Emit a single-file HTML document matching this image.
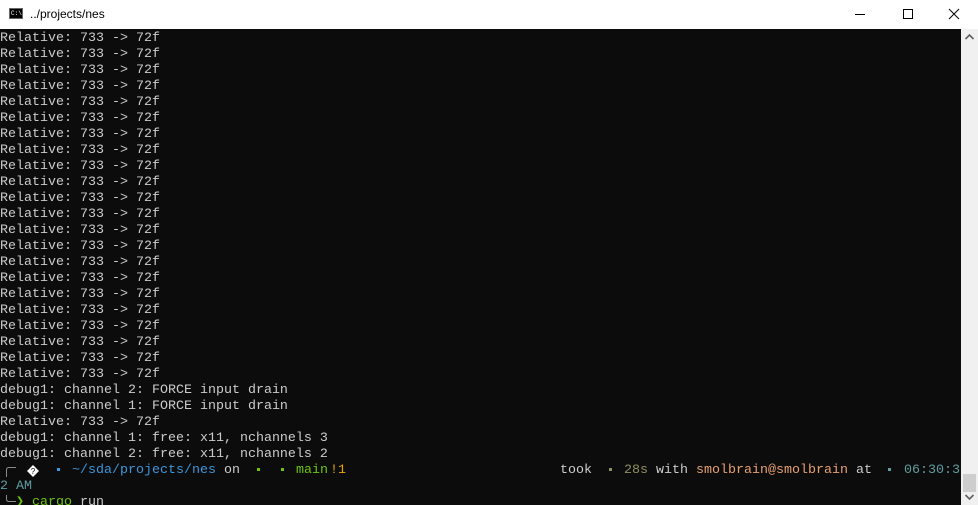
<!DOCTYPE html>
<html><head><meta charset="utf-8"><style>
html,body{margin:0;padding:0;width:978px;height:505px;overflow:hidden;background:#fff;}
#title{position:absolute;left:0;top:0;width:978px;height:29px;background:#fff;font-family:"Liberation Sans",sans-serif;font-size:12px;color:#000;}
#title .t{position:absolute;left:30px;top:7px;}
#icon{position:absolute;left:9px;top:8px;width:14px;height:11px;background:#000;border:1px solid #666;box-sizing:border-box;}
#icon span{position:absolute;left:1px;top:2px;font-size:6px;color:#fff;font-family:"Liberation Mono",monospace;line-height:6px;}
#term{position:absolute;left:0;top:29px;width:961px;height:476px;background:#0c0c0c;overflow:hidden;}
pre{position:absolute;left:0;top:2px;margin:0;font-family:"Liberation Mono","Noto Sans CJK JP",monospace;font-size:13.33px;line-height:16px;color:#cccccc;white-space:pre;}
.s{position:absolute;font-family:"Liberation Mono","DejaVu Sans Mono",monospace;font-size:13.33px;line-height:16px;white-space:pre;}
.d{position:absolute;width:3px;height:3px;background:currentColor;}
.b{color:#3a96dd}.g{color:#6cc40c}.o{color:#e5a50a}.w{color:#cccccc}.ol{color:#909060}.pe{color:#e8a070}.te{color:#5f9ea0}.gr{color:#8a8a8a}
#sb{position:absolute;left:961px;top:29px;width:17px;height:476px;background:#f0f0f0;}
#thumb{position:absolute;left:2px;top:445px;width:13px;height:18px;background:#cdcdcd;}
</style></head><body>
<div id="title"><div id="icon"><span>C:\</span></div><div class="t">../projects/nes</div>
<svg style="position:absolute;left:855px;top:8px" width="110" height="14">
<line x1="0" y1="6.5" x2="10" y2="6.5" stroke="#000"/>
<rect x="48.5" y="1.5" width="9" height="9" fill="none" stroke="#000"/>
<path d="M94 1 L104 11 M104 1 L94 11" stroke="#000"/>
</svg></div>
<div id="term"><pre>Relative: 733 -> 72f
Relative: 733 -> 72f
Relative: 733 -> 72f
Relative: 733 -> 72f
Relative: 733 -> 72f
Relative: 733 -> 72f
Relative: 733 -> 72f
Relative: 733 -> 72f
Relative: 733 -> 72f
Relative: 733 -> 72f
Relative: 733 -> 72f
Relative: 733 -> 72f
Relative: 733 -> 72f
Relative: 733 -> 72f
Relative: 733 -> 72f
Relative: 733 -> 72f
Relative: 733 -> 72f
Relative: 733 -> 72f
Relative: 733 -> 72f
Relative: 733 -> 72f
Relative: 733 -> 72f
Relative: 733 -> 72f
debug1: channel 2: FORCE input drain
debug1: channel 1: FORCE input drain
Relative: 733 -> 72f
debug1: channel 1: free: x11, nchannels 3
debug1: channel 2: free: x11, nchannels 2</pre>
<svg style="position:absolute;left:0;top:432px" width="24" height="48">
<path d="M6.5 16 V9 Q6.5 6.5 9 6.5 H16" fill="none" stroke="#8a8a8a"/>
<path d="M6.5 34 V38 Q6.5 40.5 9 40.5 H16" fill="none" stroke="#8a8a8a"/>
</svg>
<svg style="position:absolute;left:26px;top:436px" width="14" height="12"><path d="M7 0 L13 6 L7 12 L1 6Z" fill="#fff"/><text x="7" y="9" font-size="8" text-anchor="middle" fill="#000" font-family="Liberation Sans">?</text></svg>
<div class="d b" style="left:57px;top:439px"></div>
<div class="s b" style="left:72px;top:434px">~/sda/projects/nes</div>
<div class="s w" style="left:224px;top:434px">on</div>
<div class="d g" style="left:257px;top:439px"></div>
<div class="d g" style="left:281px;top:439px"></div>
<div class="s g" style="left:296px;top:434px">main</div>
<div class="s o" style="left:330px;top:434px">!1</div>
<div class="s w" style="left:560px;top:434px">took</div>
<div class="d ol" style="left:609px;top:439px"></div>
<div class="s ol" style="left:624px;top:434px">28s</div>
<div class="s w" style="left:656px;top:434px">with</div>
<div class="s pe" style="left:696px;top:434px">smolbrain@smolbrain</div>
<div class="s w" style="left:856px;top:434px">at</div>
<div class="d te" style="left:888px;top:439px"></div>
<div class="s te" style="left:904px;top:434px">06:30:3</div>
<div class="s te" style="left:0;top:450px">2 AM</div>
<div class="s g" style="left:16px;top:466px">❯</div>
<div class="s g" style="left:32px;top:466px">cargo</div>
<div class="s w" style="left:80px;top:466px">run</div>
</div>
<div id="sb">
<svg style="position:absolute;left:0;top:0" width="17" height="17"><path d="M4.5 10 L8.5 6 L12.5 10" fill="none" stroke="#606060" stroke-width="1.6"/></svg>
<div id="thumb"></div>
<svg style="position:absolute;left:0;top:459px" width="17" height="17"><path d="M4.5 7 L8.5 11 L12.5 7" fill="none" stroke="#606060" stroke-width="1.6"/></svg>
</div>
</body></html>
